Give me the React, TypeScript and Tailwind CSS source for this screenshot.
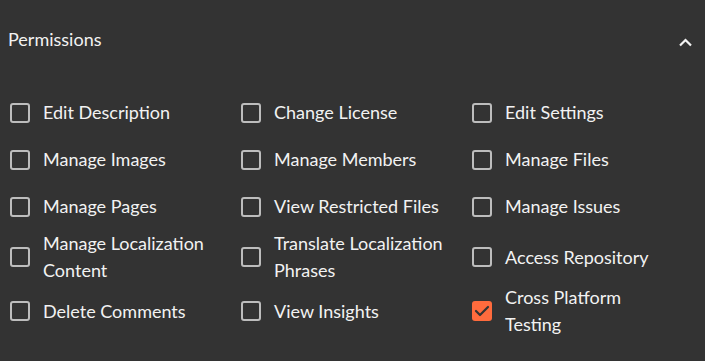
import React from "react";

const items: { label: string; checked?: boolean }[] = [
  { label: "Edit Description" },
  { label: "Change License" },
  { label: "Edit Settings" },
  { label: "Manage Images" },
  { label: "Manage Members" },
  { label: "Manage Files" },
  { label: "Manage Pages" },
  { label: "View Restricted Files" },
  { label: "Manage Issues" },
  { label: "Manage Localization Content" },
  { label: "Translate Localization Phrases" },
  { label: "Access Repository" },
  { label: "Delete Comments" },
  { label: "View Insights" },
  { label: "Cross Platform Testing", checked: true },
];

function Box({ checked }: { checked?: boolean }) {
  if (checked) {
    return (
      <div className="w-5 h-5 shrink-0 rounded-[3px] bg-[#ff6b3d] flex items-center justify-center">
        <svg width="20" height="20" viewBox="0 0 20 20" fill="none">
          <path d="M4 10 L8 14 L16 6" stroke="#333333" strokeWidth="2.2" strokeLinecap="round" strokeLinejoin="round" />
        </svg>
      </div>
    );
  }
  return <div className="w-5 h-5 shrink-0 rounded-[3px] border-2 border-[#bdbdbd]" />;
}

export default function App() {
  return (
    <div className="w-[705px] h-[361px] bg-[#333333] text-[#f2f2f2] overflow-hidden" style={{ fontFamily: "Lato, 'Open Sans', sans-serif" }}>
      <div className="h-[80px] flex items-center justify-between pl-2 pr-[13px]">
        <span className="text-[18px] -mt-[2px]">Permissions</span>
        <svg width="13" height="9" viewBox="0 0 13 9" fill="none" className="mt-[5px]">
          <path d="M1 7.5 L6.5 2 L12 7.5" stroke="#f2f2f2" strokeWidth="2.2" />
        </svg>
      </div>
      <div className="grid grid-cols-[231px_231px_231px] pl-[10px] pt-[9px]">
        {items.map((it) => (
          <div key={it.label} className="min-h-[47px] flex items-center gap-[13px]">
            <Box checked={it.checked} />
            <span className="text-[18px] leading-[27px] max-w-[172px]">{it.label}</span>
          </div>
        ))}
      </div>
    </div>
  );
}
